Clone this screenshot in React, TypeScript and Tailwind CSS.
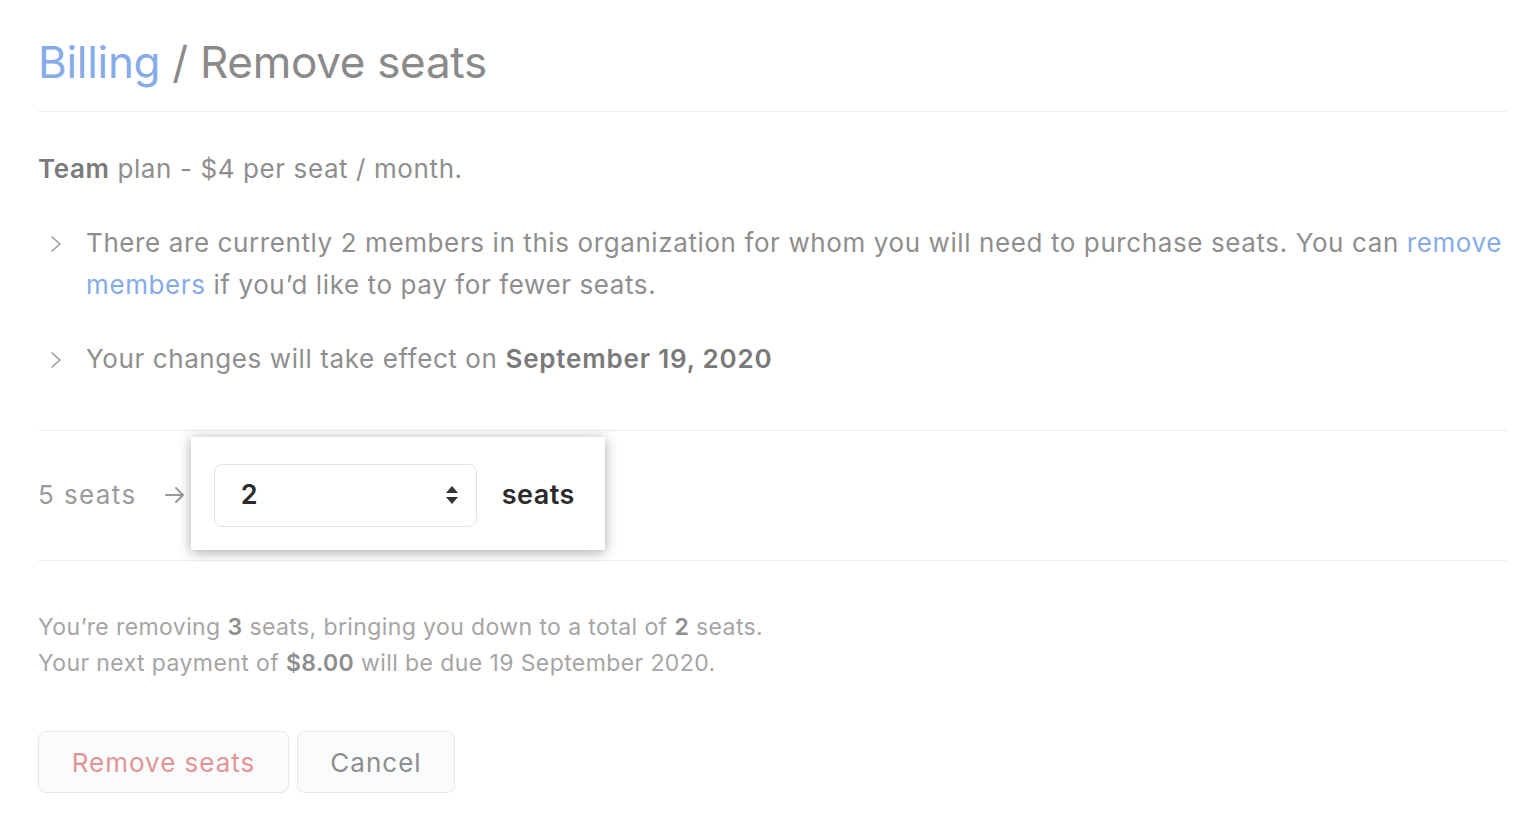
import React from 'react';

function Chevron() {
  return (
    <svg width="16" height="18" viewBox="0 0 16 18" className="shrink-0 mt-[13px] mr-[22px]" fill="none">
      <path d="M4 2l8 7-8 7" stroke="#9a9a9a" strokeWidth="1.6" strokeLinecap="round" strokeLinejoin="round" />
    </svg>
  );
}

function UpDown() {
  return (
    <svg width="14" height="22" viewBox="0 0 14 22" fill="#333">
      <path d="M7 2l6 7H1z" />
      <path d="M7 20l6-7H1z" />
    </svg>
  );
}

function Arrow() {
  return (
    <svg width="22" height="18" viewBox="0 0 22 18" fill="none">
      <path d="M2 9h17M12 2l7 7-7 7" stroke="#9a9a9a" strokeWidth="2" strokeLinecap="round" strokeLinejoin="round" />
    </svg>
  );
}

export default function App() {
  return (
    <div className="min-h-[840px] w-[1532px] bg-white pl-[38px] pr-[25px] font-['Inter','Liberation_Sans',sans-serif]">
      {/* Header */}
      <div className="pt-[36px] pb-[23px] border-b border-[#eeeeee]">
        <h1 className="text-[44px] leading-[52px] tracking-[-0.3px] text-[#8a8a8a]">
          <span className="text-[#86abe9]">Billing</span> / Remove seats
        </h1>
      </div>

      {/* Plan info */}
      <div className="pt-[39px] pb-[50px] border-b border-[#eeeeee]">
        <p className="text-[26px] leading-[36px] tracking-[0.6px] text-[#8e8e8e]">
          <span className="font-semibold text-[#7a7a7a]">Team</span> plan - $4 per seat / month.
        </p>
        <ul className="mt-[35px] space-y-[32px] text-[26px] leading-[42px] tracking-[0.6px] text-[#8e8e8e]">
          <li className="flex pl-[10px]">
            <Chevron />
            <span>
              There are currently 2 members in this organization for whom you will need to purchase seats. You can{' '}
              <span className="text-[#86abe9]">remove members</span> if you’d like to pay for fewer seats.
            </span>
          </li>
          <li className="flex pl-[10px]">
            <Chevron />
            <span>
              Your changes will take effect on <span className="font-semibold tracking-[0.8px] text-[#7a7a7a]">September 19, 2020</span>
            </span>
          </li>
        </ul>
      </div>

      {/* Seat selection */}
      <div className="flex items-start pt-[6px] pb-[10px] border-b border-[#eeeeee]">
        <div className="flex items-center h-[113px] pt-[2px]">
          <span className="text-[26px] tracking-[1.4px] text-[#9a9a9a]">5 seats</span>
          <span className="ml-[27px] mr-[5px]">
            <Arrow />
          </span>
        </div>
        <div className="flex items-center h-[113px] w-[414px] bg-white pl-[23px] pt-[3px] shadow-[0_2px_12px_rgba(0,0,0,0.35)]">
          <div className="flex items-center justify-between w-[263px] h-[63px] rounded-[8px] border border-[#e1e4e8] pl-[26px] pr-[17px]">
            <span className="text-[27px] font-semibold text-[#2b2b2b]">2</span>
            <UpDown />
          </div>
          <span className="ml-[25px] text-[27px] tracking-[0.5px] font-semibold text-[#2b2b2b]">seats</span>
        </div>
      </div>

      {/* Summary */}
      <div className="pt-[48px] text-[23px] leading-[36px] tracking-[0.4px] text-[#a5a5a5]">
        <p>
          You’re removing <span className="font-semibold text-[#8e8e8e]">3</span> seats, bringing you down to a total of{' '}
          <span className="font-semibold text-[#8e8e8e]">2</span> seats.
        </p>
        <p>
          Your next payment of <span className="font-semibold text-[#8e8e8e]">$8.00</span> will be due 19 September 2020.
        </p>
      </div>

      {/* Actions */}
      <div className="flex gap-[8px] mt-[50px]">
        <button className="w-[251px] h-[62px] rounded-[8px] border border-[#e8e8e8] bg-[#fafbfc] text-[26px] tracking-[1px] text-[#e39494]">
          Remove seats
        </button>
        <button className="w-[158px] h-[62px] rounded-[8px] border border-[#e8e8e8] bg-[#fafbfc] text-[26px] tracking-[1px] text-[#8e8e8e]">
          Cancel
        </button>
      </div>
    </div>
  );
}
